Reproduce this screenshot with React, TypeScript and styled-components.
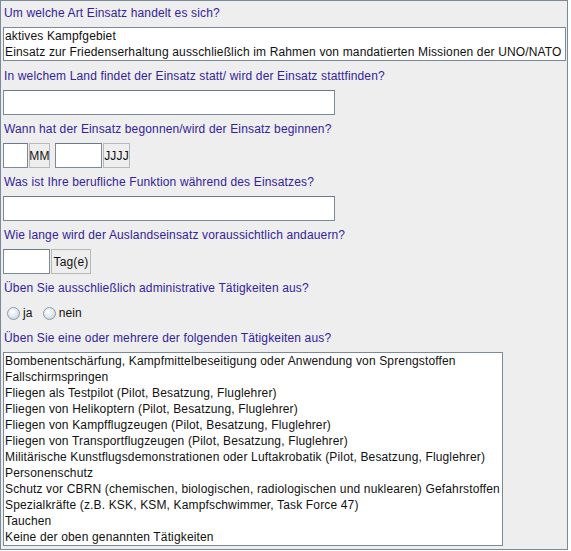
import React from "react";
import styled, { createGlobalStyle } from "styled-components";

const GlobalStyle = createGlobalStyle`
  html, body {
    margin: 0;
    padding: 0;
    background: #ffffff;
  }
  body {
    font-family: "Liberation Sans", Arial, sans-serif;
    font-size: 12px;
    letter-spacing: 0.15px;
  }
`;

const Panel = styled.div`
  box-sizing: border-box;
  width: 568px;
  height: 550px;
  border: 1px solid #7a8a99;
  background: #eeeeee;
  padding: 4px 1px 0 2px;
  display: flex;
  flex-direction: column;
  overflow: hidden;

  & > * {
    flex-shrink: 0;
  }
`;

const Question = styled.div<{ $gap?: number }>`
  color: #33229c;
  line-height: 16px;
  height: 16px;
  padding-left: 1px;
  margin-bottom: ${(p) => p.$gap ?? 6}px;
  white-space: nowrap;
`;

const ListBox = styled.div<{ $width?: number; $rows: number }>`
  box-sizing: border-box;
  width: ${(p) => (p.$width ? `${p.$width}px` : "100%")};
  height: ${(p) => p.$rows * 16 + 2}px;
  border: 1px solid #7a8a99;
  background: #ffffff;
  margin-bottom: 7px;
`;

const ListRow = styled.div`
  height: 16px;
  line-height: 16px;
  padding-left: 1px;
  color: #111111;
  white-space: nowrap;
`;

const FieldRow = styled.div`
  display: flex;
  align-items: stretch;
  height: 25px;
  margin-bottom: 6px;
`;

const TextField = styled.div<{ $width: number; $after?: number }>`
  box-sizing: border-box;
  width: ${(p) => p.$width}px;
  height: 100%;
  border: 1px solid #7a8a99;
  border-top-color: #6a7a89;
  background: #ffffff;
  margin-right: ${(p) => p.$after ?? 1}px;
`;

const UnitButton = styled.div<{ $width: number; $after?: number }>`
  box-sizing: border-box;
  width: ${(p) => p.$width}px;
  height: 100%;
  border: 1px solid #b8b8b8;
  background: #eeeeee;
  color: #111111;
  display: flex;
  align-items: center;
  justify-content: center;
  margin-right: ${(p) => p.$after ?? 0}px;
  white-space: nowrap;
`;

const RadioGroup = styled.div`
  display: flex;
  align-items: center;
  height: 22px;
  padding-left: 4px;
  margin-bottom: 6px;
`;

const RadioOption = styled.label`
  display: flex;
  align-items: center;
  gap: 3px;
  margin-right: 10px;
  color: #111111;
`;

const RadioDot = styled.span`
  box-sizing: border-box;
  width: 13px;
  height: 13px;
  border-radius: 50%;
  border: 1px solid #8a9aa9;
  background: radial-gradient(circle at 40% 35%, #ffffff 0%, #e4ebf3 45%, #b8c8d8 100%);
`;

const einsatzArten = [
  "aktives Kampfgebiet",
  "Einsatz zur Friedenserhaltung ausschließlich im Rahmen von mandatierten Missionen der UNO/NATO",
];

const taetigkeiten = [
  "Bombenentschärfung, Kampfmittelbeseitigung oder Anwendung von Sprengstoffen",
  "Fallschirmspringen",
  "Fliegen als Testpilot (Pilot, Besatzung, Fluglehrer)",
  "Fliegen von Helikoptern (Pilot, Besatzung, Fluglehrer)",
  "Fliegen von Kampfflugzeugen (Pilot, Besatzung, Fluglehrer)",
  "Fliegen von Transportflugzeugen (Pilot, Besatzung, Fluglehrer)",
  "Militärische Kunstflugsdemonstrationen oder Luftakrobatik (Pilot, Besatzung, Fluglehrer)",
  "Personenschutz",
  "Schutz vor CBRN (chemischen, biologischen, radiologischen und nuklearen) Gefahrstoffen",
  "Spezialkräfte (z.B. KSK, KSM, Kampfschwimmer, Task Force 47)",
  "Tauchen",
  "Keine der oben genannten Tätigkeiten",
];

const App = () => {
  return (
    <>
      <GlobalStyle />
      <Panel>
        <Question>Um welche Art Einsatz handelt es sich?</Question>
        <ListBox $rows={einsatzArten.length}>
          {einsatzArten.map((a) => (
            <ListRow key={a}>{a}</ListRow>
          ))}
        </ListBox>

        <Question>In welchem Land findet der Einsatz statt/ wird der Einsatz stattfinden?</Question>
        <FieldRow>
          <TextField $width={332} />
        </FieldRow>

        <Question>Wann hat der Einsatz begonnen/wird der Einsatz beginnen?</Question>
        <FieldRow>
          <TextField $width={25} />
          <UnitButton $width={21} $after={5}>MM</UnitButton>
          <TextField $width={47} />
          <UnitButton $width={27}>JJJJ</UnitButton>
        </FieldRow>

        <Question>Was ist Ihre berufliche Funktion während des Einsatzes?</Question>
        <FieldRow>
          <TextField $width={332} />
        </FieldRow>

        <Question>Wie lange wird der Auslandseinsatz voraussichtlich andauern?</Question>
        <FieldRow>
          <TextField $width={47} />
          <UnitButton $width={40}>Tag(e)</UnitButton>
        </FieldRow>

        <Question>Üben Sie ausschließlich administrative Tätigkeiten aus?</Question>
        <RadioGroup>
          <RadioOption>
            <RadioDot />
            ja
          </RadioOption>
          <RadioOption>
            <RadioDot />
            nein
          </RadioOption>
        </RadioGroup>

        <Question>Üben Sie eine oder mehrere der folgenden Tätigkeiten aus?</Question>
        <ListBox $width={500} $rows={taetigkeiten.length}>
          {taetigkeiten.map((t) => (
            <ListRow key={t}>{t}</ListRow>
          ))}
        </ListBox>
      </Panel>
    </>
  );
};

export default App;
